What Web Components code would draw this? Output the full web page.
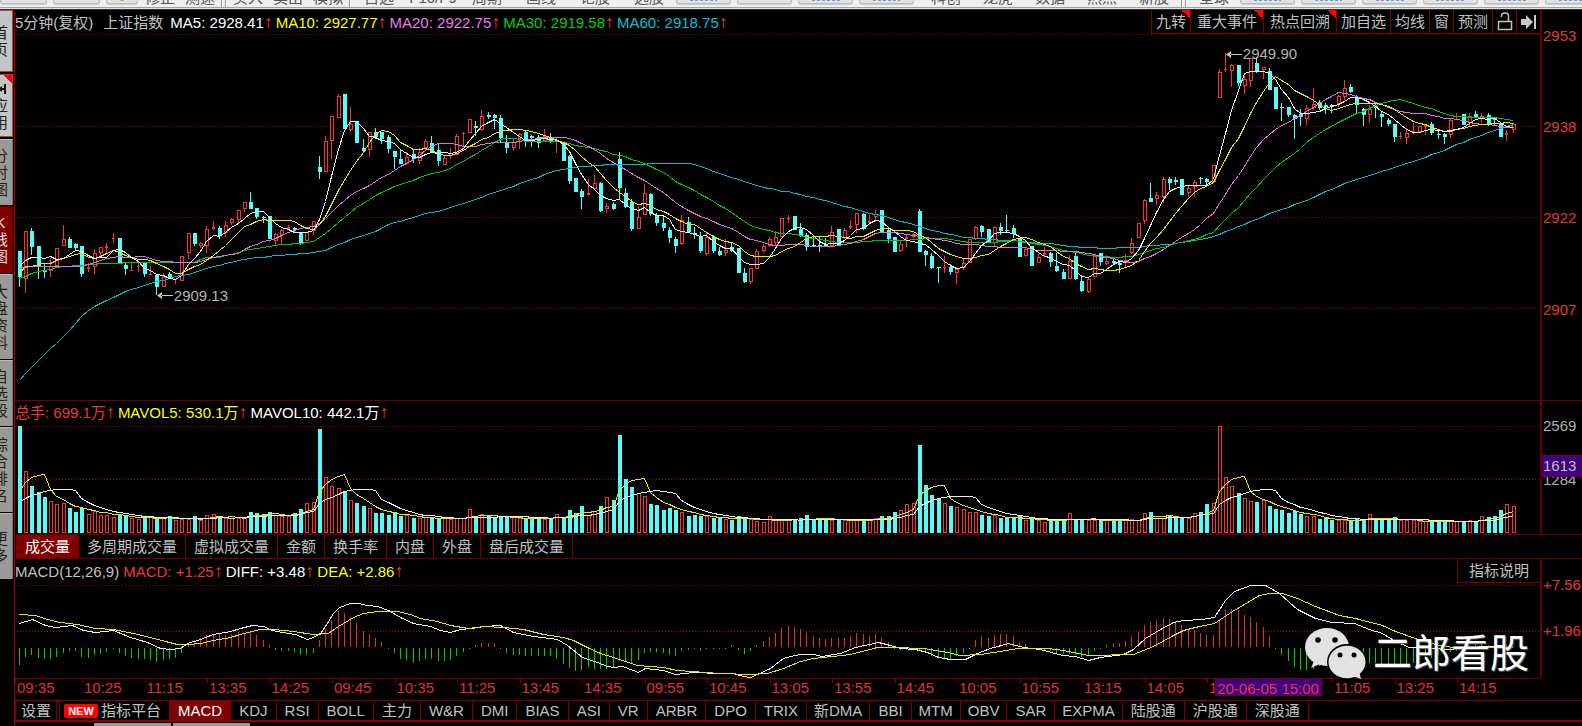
<!DOCTYPE html>
<html lang="zh-CN">
<head>
<meta charset="utf-8">
<title>上证指数 5分钟</title>
<style>
html,body{margin:0;height:100%;background:#000}
body{font:15px/18px "Liberation Sans","Noto Sans CJK SC",sans-serif;color:#c0c0c0;overflow:hidden}
</style>
</head>
<body>
<stock-workspace></stock-workspace>
<script>
const RED='#ff3232',CYAN='#54fcfc',LINE='#800000';
const BASE=`*{box-sizing:border-box}button{font:inherit;color:inherit;background:none;border:0;padding:0;margin:0;white-space:nowrap;cursor:pointer}`;
function define(name,html,setup){
  customElements.define(name,class extends HTMLElement{
    connectedCallback(){
      if(this.shadowRoot)return;
      const root=this.attachShadow({mode:'open'});
      root.innerHTML='<style>'+BASE+'</style>'+(typeof html==='function'?html(this):html);
      if(setup)setup(root,this);
    }
  });
}

/* Candles, one per five minutes: colour, high, body top, body bottom, low (thirds of a pixel). */
const candles=`c752,752,832,860 r692,692,836,878 c684,692,740,766 c737,737,797,838 c792,811,815,834 r775,797,812,830 r745,745,797,797 r674,718,737,737 c710,718,745,745 c730,733,745,750
c737,737,822,830 r790,800,806,815 r748,760,800,823 r741,741,760,770 r730,738,745,760 r700,714,718,728 c714,714,790,790 c785,795,808,826 r785,809,812,812 r785,797,800,815
c790,790,822,832 r797,821,825,825 c825,825,862,885 r820,830,862,862 c815,822,838,838 r836,836,840,852 r767,767,843,843 r700,700,760,776 c700,700,733,738 r725,730,738,745
r677,688,738,758 r662,682,686,690 c677,684,708,716 r664,675,700,712 r655,656,670,675 r630,630,660,670 r606,606,628,635 c576,606,628,628 c625,625,652,658 c648,650,653,668
c648,648,718,718 r700,702,722,735 r688,690,705,735 r674,682,686,690 c682,685,690,697 c697,697,730,736 r697,697,724,724 r663,663,693,706 c467,500,515,538 r408,422,517,517
r349,349,424,476 r283,288,355,355 c283,283,388,388 r320,373,391,395 c364,364,430,430 c418,445,453,460 r397,397,451,470 c384,395,410,418 c395,395,418,432 c405,410,448,460
c452,452,472,508 c450,478,492,492 r455,472,492,495 c450,462,478,488 r443,455,484,492 r418,422,443,450 c407,430,458,458 c433,450,482,497 r465,475,496,496 r445,460,468,476
r402,408,464,465 r397,399,402,438 r358,358,398,398 c362,377,384,408 r331,348,390,392 c335,346,350,358 c342,345,354,388 c346,354,415,430 c405,430,445,458 r415,427,443,452
r400,402,418,448 c394,395,420,440 c405,409,414,440 c405,410,430,445 r388,408,424,425 c400,412,424,430 r415,422,426,460 c428,428,482,482 c465,468,542,552 c535,535,575,575
c568,572,590,628 r538,580,585,585 r526,550,566,570 c546,550,632,635 r610,618,628,640 c605,612,628,630 c456,478,565,598 c565,578,622,625 c598,605,688,692 r618,652,686,686
r552,580,645,645 c580,582,643,648 c640,645,670,678 c648,668,684,692 c680,690,714,730 c712,716,738,760 r645,660,732,735 c650,666,696,698 c680,698,706,718 c697,708,752,758
r700,712,762,768 c706,712,752,758 c740,754,766,768 r718,750,758,768 c728,740,752,756 c744,744,820,820 c805,818,846,848 r803,803,846,853 r747,752,806,806 r733,738,754,756
r710,718,738,742 r692,711,730,735 r655,655,710,710 r645,654,658,670 c647,647,690,690 c670,688,708,710 c700,704,740,752 c710,735,742,742 c712,734,742,756 c715,733,738,740
r678,696,738,742 c688,688,735,735 r684,690,715,718 r660,678,684,686 r640,640,676,700 c640,642,686,690 r645,664,668,675 r630,642,652,665 c630,630,695,695 c682,690,718,728
c712,712,755,755 r720,732,754,755 r705,712,716,740 r698,702,712,715 c627,632,755,755 c750,752,764,798 c760,768,805,808 c800,800,803,850 r768,800,803,820 c792,800,815,826
r800,806,818,853 r775,788,804,810 r718,718,790,790 r678,682,718,720 c676,678,695,710 c688,688,730,730 r678,682,730,740 c670,680,692,705 c646,690,694,695 c676,685,702,715
c715,715,772,772 r740,748,769,770 c738,738,797,797 r762,772,788,790 r740,758,766,770 c756,760,785,800 c760,797,814,815 c808,815,838,838 r765,782,836,838 c758,768,838,840
c826,843,872,876 r835,836,875,880 r768,768,832,832 c758,760,785,798 r765,783,793,795 c775,784,790,795 c780,790,794,818 r762,780,790,800 r715,728,760,762 r668,668,713,713
r598,600,664,672 c550,594,605,606 r575,584,598,615 r532,538,590,608 c530,538,550,570 c532,540,545,556 c538,538,584,584 r558,565,578,590 r540,545,562,592 c530,535,538,552
c535,538,545,556 r494,494,545,545 r207,217,293,293 r160,208,210,215 r193,196,213,260 c196,196,248,258 r228,238,257,282 r175,175,244,260 c172,190,214,218 r200,202,210,236
c205,212,270,270 c261,261,328,328 c308,320,323,362 c321,321,345,350 c343,345,358,418 c328,343,350,377 r316,323,358,376 r264,312,325,330 c300,305,325,330 c308,314,320,342
c312,315,320,338 r285,288,312,320 r241,265,290,300 c252,260,275,278 c284,292,316,340 c325,328,346,377 r316,328,346,368 c308,318,325,355 c335,343,352,380 c355,361,372,377
c372,372,412,425 r395,407,410,418 r385,400,413,433 r368,392,396,405 r377,377,395,395 r374,376,382,406 c366,372,400,405 c390,402,406,418 c400,402,411,432 r355,361,405,415
r340,358,360,360 c343,343,375,375 r338,348,370,380 c332,343,350,350 r340,348,356,368 c340,345,374,377 c350,355,360,376 c372,372,410,410 r390,398,406,422 r370,372,390,398`
 .trim().split(/\s+/).map(s=>({up:s[0]==='r',v:s.slice(1).split(',').map(Number)}));

/* Traded volume, one trading day (48 bars) to a row. */
const volume=`320 187 142 124 108 97 86 90 75 64 76 58 66 53 55 49 55 52 46 42 48 50 42 44 52 38 42 42 52 40 55 56 48 44 46 46 48 64 60 56 64 53 52 52 60 72 90 93
312 168 142 134 124 100 90 80 75 60 60 53 62 50 53 46 46 48 48 44 44 42 44 44 72 48 56 50 48 48 48 48 46 42 48 46 42 45 56 48 68 60 80 55 65 80 108 98
294 162 138 120 112 88 84 68 76 68 64 50 54 50 50 46 46 42 38 52 44 42 35 34 52 38 38 38 38 46 53 42 42 46 38 40 38 40 40 42 40 45 52 52 64 68 86 90
264 143 113 104 90 82 78 71 64 64 53 50 54 44 46 44 50 38 43 40 34 38 38 38 60 40 40 38 40 40 42 40 38 40 42 40 60 64 45 45 52 50 48 46 60 64 88 90
322 168 142 120 105 96 94 98 80 72 68 60 66 56 50 50 42 44 40 38 40 38 46 40 56 40 40 42 48 38 38 38 36 36 36 36 36 36 36 36 38 36 50 48 52 68 86 80`.trim().split(/\s+/).map(Number);

/* MACD histogram, positive above the zero line. */
const histogram=`-50 -27 -20 -30 -33 -33 -27 -16 -10 -10
-27 -30 -22 -18 -12 -4 -15 -25 -30 -32
-33 -35 -42 -37 -32 -30 -16 12 20 28
35 38 40 35 40 44 42 44 35 22
5 -5 -8 -10 -13 -22 -22 -14 20 55
82 108 103 90 72 48 38 26 14 -3
-15 -33 -35 -44 -38 -32 -32 -40 -40 -36
-25 -12 -3 5 12 12 12 -3 -16 -20
-20 -24 -24 -24 -24 -24 -32 -47 -60 -70
-66 -58 -62 -62 -62 -58 -40 -40 -45 -35
-15 -12 -12 -15 -20 -24 -10 -5 -3 -8
-3 -4 -4 -4 5 -5 -17 -8 7 18
30 42 57 64 60 53 43 32 27 24
27 27 27 34 42 38 34 38 27 14
-3 -5 -5 -6 -8 -15 -24 -27 -30 -32
-25 -15 -3 20 32 28 35 38 38 32
15 8 -3 -5 -5 -8 -15 -18 -18 -20
-26 -24 -8 -3 6 12 12 18 32 45
65 76 80 87 83 77 65 53 50 42
35 35 85 110 115 110 95 90 75 60
33 -3 -20 -40 -58 -65 -65 -62 -55 -45
-45 -45 -45 -42 -42 -42 -44 -44 -52 -56
-56 -54 -50 -44 -38 -34 -30 -20 -15 -12
-8 -5 3 8 12 5 -3 3 5 3`.trim().split(/\s+/).map(Number);

const diff=[[58,968],[95,957],[135,975],[165,980],[215,975],[250,990],[285,997],[340,990],[390,1012],[440,1025],[480,1043],[510,1047],[540,1045],[560,1030],[600,1018],[640,1003],[690,992],[720,983],[755,974],[790,977],[815,990],[845,995],[885,1003],[921,1018],[940,1012],[959,1000],[980,970],[1000,940],[1018,920],[1050,908],[1075,908],[1100,916],[1130,918],[1165,930],[1200,950],
[1240,968],[1290,978],[1320,990],[1350,995],[1380,988],[1415,983],[1450,978],[1500,976],[1540,995],[1600,1008],[1670,1018],[1700,1035],[1746,1070],[1790,1085],[1820,1098],[1840,1102],[1865,1098],[1900,1110],[1915,1115],[1935,1105],[1990,1110],[2025,1122],[2080,1117],[2160,1120],[2200,1120],[2230,1128],[2250,1130],[2270,1123],[2310,1103],[2350,1075],[2370,1067],[2400,1062],
[2440,1062],[2465,1067],[2520,1058],[2565,1040],[2635,1027],[2670,1035],[2700,1045],[2745,1048],[2780,1057],[2815,1070],[2850,1077],[2895,1077],[2930,1060],[2970,1043],[3025,1030],[3070,1040],[3120,1048],[3185,1065],[3225,1068],[3265,1080],[3300,1070],[3370,1062],[3400,1048],[3435,1015],[3480,988],[3520,965],[3550,960],
[3606,957],[3643,952],[3676,900],[3701,873],[3736,862],[3751,855],[3796,855],[3836,880],[3891,928],[3946,953],[3996,966],[4061,970],[4106,988],[4146,998],[4186,1022],[4226,1040],[4286,1043],[4346,1048],[4406,1042],[4466,1038],[4536,1042]];
const dea=[[58,942],[105,945],[140,957],[180,966],[230,971],[285,983],[340,988],[400,998],[450,1010],[495,1022],[530,1032],[565,1032],[600,1028],[640,1020],[690,1010],[740,997],[780,988],[820,987],[880,994],[940,1003],[985,998],[1015,978],[1060,950],[1090,940],[1130,932],[1190,933],
[1230,943],[1260,955],[1310,963],[1350,975],[1405,983],[1450,978],[1510,980],[1570,988],[1630,1002],[1690,1012],[1720,1020],[1760,1042],[1800,1058],[1840,1070],[1910,1095],[1990,1100],[2030,1110],[2160,1118],[2250,1123],[2300,1120],[2350,1103],[2400,1084],
[2440,1075],[2550,1063],[2630,1042],[2680,1040],[2770,1043],[2840,1057],[2880,1065],[2940,1063],[3000,1052],[3050,1043],[3140,1043],[3190,1050],[3265,1065],[3400,1062],[3460,1038],[3520,1005],[3550,990],
[3596,977],[3643,968],[3696,932],[3776,885],[3806,878],[3846,878],[3891,895],[3946,918],[4016,945],[4066,953],[4146,975],[4186,992],[4246,1014],[4306,1033],[4356,1040],[4536,1040]];

const X=i=>Math.floor(4.33+6.25*i);
const rect=(x,y,w,h,f)=>`<rect x="${x}" y="${y}" width="${w}" height="${h}" fill="${f}"/>`;
const box=(x,y,w,h)=>`<rect x="${x+.5}" y="${y+.5}" width="${w-1}" height="${Math.max(h-1,1)}" fill="#000" stroke="${RED}"/>`;
const poly=(pts,c)=>`<polyline points="${pts.map(p=>p.join(',')).join(' ')}" fill="none" stroke="${c}"/>`;
const dots=y=>`<path d="M2 ${y}.5H1525" stroke="#a00000" stroke-dasharray="1 2" fill="none"/>`;
const svg=(h,body)=>`<svg viewBox="0 0 1525 ${h}" preserveAspectRatio="none" shape-rendering="crispEdges" aria-hidden="true">${body}</svg>`;
/* Moving average whose first values come from key points [index, value] before a full window exists. */
function average(vals,n,lead){
  return vals.map((_,i)=>{
    if(i>=n-1){let s=0;for(let k=i-n+1;k<=i;k++)s+=vals[k];return s/n}
    let a=lead[0],b=lead[lead.length-1];
    for(let k=0;k<lead.length-1;k++)if(lead[k][0]<=i&&lead[k+1][0]>=i){a=lead[k];b=lead[k+1]}
    return b[0]===a[0]?a[1]:a[1]+(b[1]-a[1])*(i-a[0])/(b[0]-a[0]);
  });
}
const track=(vals,map)=>vals.map((v,i)=>[X(i)+.5,Math.round(map(v))+.5]);

function priceSvg(){
  const y=v=>Math.round(v/3)-10;
  let s=[24,116,207,298].map(dots).join('');
  candles.forEach((c,i)=>{
    const x=X(i),[h,t,b,l]=c.v.map(y),col=c.up?RED:CYAN;
    s+=rect(x,h,1,Math.max(l-h,1),col);
    s+=c.up&&b-t>2?box(x-1,t,4,b-t):rect(x-1,t,c.up?3:4,Math.max(b-t,1),col);
  });
  const close=candles.map(c=>c.up?c.v[1]:c.v[2]),f=v=>v/3-10.5;
  s+=poly(track(average(close,60,[[0,1140],[3.5,1072],[6,1030],[11.3,925],[13,910],[16,882],[20,855],[24,835],[27,822],[31,800],[36,778],[41,767],[47,758],[49,750],[53,718],[57,695],[59,675]]),f),'#00b8d0');
  s+=poly(track(average(close,30,[[0,835],[3,815],[7,800],[10,795],[14,790],[20,787],[28,788]]),f),'#00c800');
  s+=poly(track(average(close,20,[[0,805],[2,800],[10,798],[14,775],[16,770],[18,772]]),f),'#e070e0');
  s+=poly(track(average(close,10,[[0,820],[1,800],[2,800],[3,793],[4,790],[5,790],[6,782],[7,775],[8,768]]),f),'#e8e800');
  s+=poly(track(average(close,5,[[0,800],[1,782],[2,773],[3,772]]),f),'#f0f0f0');
  return svg(390,s);
}
function volumeSvg(){
  let s=dots(26)+dots(79);
  volume.forEach((v,i)=>{
    const x=X(i),h=Math.round(v/3),c=candles[i];
    s+=c&&c.up?box(x-1,133-h,4,h):rect(x-1,133-h,4,h,CYAN);
  });
  const f=v=>133-v/3;
  s+=poly(track(average(volume,5,[[0,127],[1,153],[2,168],[3,173]]),f),'#e8e800');
  s+=poly(track(average(volume,10,[[0,92],[1,105],[2,113],[3,120],[4,127],[5,128],[6,131],[7,133],[8,131]]),f),'#f0f0f0');
  return svg(134,s);
}
function macdSvg(){
  let s=dots(26)+dots(72);
  histogram.forEach((v,i)=>{
    const h=Math.max(1,Math.round(Math.abs(v)/3));
    s+=v>0?rect(X(i),88-h,1,h,'#e03030'):rect(X(i),89,1,h,'#00d000');
  });
  const p=a=>a.map(([x,y])=>[Math.round(x/3)-15+.5,Math.round(y/3)-259+.5]);
  return svg(119,s+poly(p(diff),'#f0f0f0')+poly(p(dea),'#e8e800'));
}

define('tool-strip',()=>{
  const t=l=>l.map(x=>`<button class="t">${x}</button>`).join('');
  const p=l=>l.map(w=>`<button class="p" aria-label="工具">${w?`<i style="width:${w}px"></i>`:''}</button>`).join('');
  return `<style>
  :host{display:flex;align-items:flex-end;height:10px;overflow:hidden;background:linear-gradient(#efefef 7px,#a0a0a0 7px,#a0a0a0 8px,#f4f4f4 8px,#d0d0d0 9px,#333 9px);color:#555;white-space:nowrap}
  div{display:flex;flex:none;align-items:flex-end}
  .t{line-height:20px;height:20px;margin-bottom:2px;flex:none}
  .a .t{width:40px}.b .t{width:54px}.c .t{width:52px}
  .p{width:55px;height:20px;margin:0 6px 6px 0;border:1px solid #bbb;border-radius:3px;background:#e2e2e2;box-shadow:0 1px #cfcfcf;display:flex;align-items:flex-end;justify-content:center;flex:none}
  .p.s{width:47px}.p.m{width:32px;margin-right:2px}
  i{height:2px;margin-bottom:2px;background:repeating-linear-gradient(90deg,#6aa0e0 0 3px,#dfe3ea 3px 5px)}
  .m i{width:6px;height:3px;background:#c8962c;border-radius:0 0 3px 3px}
  hr{width:2px;height:8px;margin:0 1px 3px;border:0;border-left:1px solid #999;border-right:1px solid #fff;flex:none}
  </style>
  <div><button class="p s" aria-label="后退"></button><button class="p s" aria-label="前进"></button><button class="p m" aria-label="提示"><i></i></button></div>
  <div class="a">${t(['修正','测速'])}<hr><hr>${t(['买入','卖出','模拟'])}<hr></div>
  <div class="b">${t(['自选','F10/F9','周期','画线','论股','选股'])}</div>
  <div>${p([27,0,28,27])}</div>
  <div class="c">${t(['科创','龙虎','数据','热点','新股'])}<hr><hr>${t(['全球'])}</div>
  <div>${p([27,27,28,30,28,28])}</div>`;
});

define('side-nav',()=>`<style>
  :host{display:flex;flex-direction:column;background:#000;overflow:hidden;width:14px;padding-bottom:4px}
  button{position:relative;display:flex;align-items:center;width:13px;margin-bottom:1px;background:#999;color:#222;border-top:1px solid #bbb;border-right:1px solid #777;line-height:17px;white-space:normal;overflow:hidden;flex:1 1 0}
  span{flex:none;width:15px;margin-left:-7px;text-align:center;word-break:break-all}
  .l{background:#c4c4c4;border-color:#b04040;border-bottom:1px solid #b04040;margin-bottom:2px}
  .k{background:#800000;color:#fff;border-color:#600}
  .k span{color:#ddd}
  .n::after{content:"";position:absolute;right:0;top:0;width:9px;height:9px;background:linear-gradient(45deg,transparent 50%,#f00 50%)}
  svg{display:block;margin:2px 0 2px 5px}
  </style>`+[['首页',61,'l'],['应用',63,'l n'],['分时图',66,''],['K线图',67,'k'],['大盘资料',86,''],['自选股',67,''],['综合排名',86,''],['更多',66,'']]
  .map(([t,g,c])=>`<button class="${c}" style="flex-grow:${g}"><span>${c.includes('n')?'<svg width="9" height="12" viewBox="0 0 9 12"><path d="M0 6L4 3V9zM6 1h2v10H6zM3 5h3v2H3z" fill="#111"/></svg>':''}${t}</span></button>`).join(''));

define('legend-line',`<style>
  :host{display:flex;align-items:center;height:24px;white-space:nowrap;position:relative;padding-top:1px}
  ::slotted(span){margin-right:4px}
  </style><slot></slot>`);
define('legend-value',`<style>:host{display:block;margin-right:3px}b{font-weight:400;font-size:18px;line-height:15px;color:#ff3232}</style><slot></slot><b>↑</b>`);

define('chart-tools',()=>`<style>
  :host{display:flex;height:24px;border-bottom:1px solid ${LINE};background:#000}
  button{position:relative;border-left:1px solid ${LINE};min-width:24px;padding:0 4px;display:flex;align-items:center;justify-content:center}
  .w{padding:0 6px}
  .i{padding:0 3px}
  .f::after{content:"";position:absolute;right:0;top:0;width:9px;height:9px;background:linear-gradient(45deg,transparent 50%,#f00 50%)}
  svg{display:block}
  </style>
  <button class="f">九转</button><button class="f w">重大事件</button><button class="f w">热点回溯</button><button>加自选</button><button>均线</button><button>窗</button><button>预测</button>
  <button class="i" aria-label="锁定"><svg width="16" height="20" viewBox="0 0 16 20" fill="none" stroke="#c0c0c0"><path d="M1.500 9.500h13v8h-13z" stroke-width="1.500"/><path d="M4.500 5V4q0-3 3.500-3t3.500 3v5" stroke-width="1.500"/></svg></button>
  <button class="i" aria-label="收起"><svg width="16" height="16" viewBox="0 0 16 16" fill="#c8c8c8"><path d="M0 5h5V1l7 7-7 7v-4H0zM13 1h2v14h-2z"/></svg></button>`);

define('axis-scale',`<style>
  :host{position:relative;display:grid;border-left:2px solid #600000;padding:17px 0 0 1px;white-space:nowrap;color:#e03838}
  ::slotted(mark){position:absolute;left:0;right:0;top:55px;background:#400080;color:#c0c0c0;border:1px solid #700030;border-width:1px 0;padding:1px 0 1px 1px}
  </style><slot></slot>`);

define('tab-strip',(el)=>`<style>
  :host{display:flex;background:#000;padding-left:1px}
  button{border-left:1px solid ${LINE};padding:0 8px;display:flex;align-items:center}
  button:last-of-type{border-right:1px solid ${LINE}}
  .on{background:#800000;color:#fff}
  .tight{padding:0 7px}
  .set{padding:0 5px;border-right:1px solid ${LINE};margin-right:2px}
  .new{padding:0 8px 0 4px}
  em{font:bold 11px/14px "Liberation Sans",sans-serif;font-style:normal;color:#fff;background:#f00;border-radius:2px;width:34px;margin-right:3px;text-align:center}
  </style>`+el.getAttribute('items').split(',').map(t=>{
    const on=t===el.getAttribute('selected');
    if(t==='设置')return `<button class="set">${t}</button>`;
    if(t==='指标平台')return `<button class="new"><em>NEW</em>${t}</button>`;
    const tight=['新DMA','MTM','OBV','EXPMA'].includes(t);
    return `<button class="${on?'on':''}${tight?'tight':''}" aria-pressed="${on}">${t}</button>`}).join(''));

define('time-axis',()=>`<style>
  :host{position:relative;display:grid;grid-template-columns:134fr repeat(22,125fr) 166fr;border-top:1px solid ${LINE};color:#e03030}
  time{position:relative;padding:0 0 0 2px;white-space:nowrap}
  time::before{content:"";position:absolute;left:0;top:0;width:1px;height:4px;background:${LINE}}
  mark{position:absolute;left:78.7%;top:0;bottom:1px;background:#400080;color:#e03a50;border:1px solid #700030;border-top:0;padding:1px 0 0 1px;width:107px;white-space:nowrap;overflow:hidden}
  </style>`+'09:35 10:25 11:15 13:35 14:25 09:45 10:35 11:25 13:45 14:35 09:55 10:45 13:05 13:55 14:45 10:05 10:55 13:15 14:05 14:55 - 11:05 13:25 14:15'.split(' ').map(t=>`<time>${t==='-'?'':t}</time>`).join('')+'<mark>20-06-05 15:00</mark>');

define('water-mark',`<style>
  :host{display:flex;align-items:flex-start;color:#fff;font-size:39px;line-height:44px;white-space:nowrap;text-shadow:1px 1px 1px #666}
  svg{display:block;flex:none;margin-right:6px}
  span{margin-top:7px}
  </style>
  <svg width="64" height="56" viewBox="0 0 64 56" fill="#e2e2e2"><path d="M12 34L8 43l11-5z"/><ellipse cx="24" cy="22" rx="22" ry="19"/><ellipse cx="44" cy="37" rx="20" ry="18" fill="#000"/><ellipse cx="44" cy="37" rx="18.500" ry="16.300"/><path d="M50 51l8 3-2-8z"/><g fill="#000"><circle cx="15" cy="15" r="2.800"/><circle cx="32" cy="15" r="2.800"/><circle cx="37" cy="30" r="2.500"/><circle cx="51" cy="30" r="2.500"/></g></svg><span>二郎看股</span>`);

define('chart-plot',(el)=>`<style>
  :host{display:block;position:relative;min-width:0;min-height:0}
  svg{position:absolute;inset:0;width:100%;height:100%;display:block}
  ::slotted(*){z-index:1}
  </style>`+({price:priceSvg,volume:volumeSvg,macd:macdSvg})[el.getAttribute('kind')]()+'<slot></slot>');

define('stock-workspace',()=>`<style>
  :host{display:grid;grid-template-rows:10px minmax(0,1fr);height:100vh}
  .main{display:grid;grid-template-columns:14px minmax(0,1fr);min-height:0}
  side-nav{height:calc(100% - 142px)}
  .desk{display:grid;grid-template-rows:minmax(0,390fr) minmax(0,134fr) 25px minmax(0,119fr) 22px 22px 4px;min-height:0;border-left:1px solid #a00000}
  .row{display:grid;grid-template-columns:minmax(0,1fr) 42px;min-height:0}
  .v{box-shadow:inset 0 1px #700000}
  .price axis-scale{grid-template-rows:91fr 91fr 92fr 99fr}
  .v axis-scale{grid-template-rows:54fr 63fr}
  .v axis-scale span{color:#b0b0b0}
  .m axis-scale{grid-template-rows:46fr 56fr}
  .tabs{border-top:1px solid #700000;border-bottom:1px solid #700000}
  .time{padding-right:42px}
  .ind{border-top:1px solid ${LINE};border-bottom:2px solid #900000;padding-left:0}
  .foot{display:flex;background:#000;padding-left:79px;gap:2px;align-items:flex-end}
  .foot i{width:77px;height:3px;background:#999}
  .head{display:flex;justify-content:space-between;position:relative}
  .period{margin-right:10px}
  .name{margin-right:7px}
  .y{color:#ffff00}.p{color:#f078f0}.g{color:#00d000}.b{color:#00c0d8}.w{color:#fff}.r{color:#f03838}
  .note{position:absolute;display:flex;align-items:center;gap:1px;color:#b4b4b4}
  .lo{left:9.3%;top:71%}.hi{left:79.400%;top:9%}
  .help{position:absolute;right:0;top:0;height:24px;border:solid ${LINE};border-width:0 0 1px 1px;background:#000;padding:0 11px}
  water-mark{position:absolute;right:11px;top:66px}
  </style>
  <tool-strip></tool-strip>
  <div class="main"><side-nav></side-nav>
  <div class="desk">
    <div class="row price"><chart-plot kind="price">
      <div class="head"><legend-line><span class="period">5分钟(复权)</span><span class="name">上证指数</span><legend-value class="w">MA5: 2928.41</legend-value><legend-value class="y">MA10: 2927.77</legend-value><legend-value class="p">MA20: 2922.75</legend-value><legend-value class="g">MA30: 2919.58</legend-value><legend-value class="b">MA60: 2918.75</legend-value></legend-line><chart-tools></chart-tools></div>
      <div class="note lo"><svg width="16" height="7" viewBox="0 0 16 7"><path d="M5 0L0 3.500 5 7zM4 3h12v1H4z" fill="#c8c8c8"/></svg>2909.13</div>
      <div class="note hi"><svg width="16" height="7" viewBox="0 0 16 7"><path d="M5 0L0 3.500 5 7zM4 3h12v1H4z" fill="#c8c8c8"/></svg>2949.90</div>
    </chart-plot><axis-scale><span>2953</span><span>2938</span><span>2922</span><span>2907</span></axis-scale></div>
    <div class="row v"><chart-plot kind="volume"><legend-line><legend-value class="r">总手: 699.1万</legend-value><legend-value class="y">MAVOL5: 530.1万</legend-value><legend-value class="w">MAVOL10: 442.1万</legend-value></legend-line></chart-plot><axis-scale><span>2569</span><span>1284</span><mark>1613</mark></axis-scale></div>
    <tab-strip class="tabs" items="成交量,多周期成交量,虚拟成交量,金额,换手率,内盘,外盘,盘后成交量" selected="成交量"></tab-strip>
    <div class="row m"><chart-plot kind="macd"><legend-line><span>MACD(12,26,9)</span><legend-value class="r">MACD: +1.25</legend-value><legend-value class="w">DIFF: +3.48</legend-value><legend-value class="y">DEA: +2.86</legend-value></legend-line><button class="help">指标说明</button><water-mark></water-mark></chart-plot><axis-scale><span>+7.56</span><span>+1.96</span></axis-scale></div>
    <div class="time"><time-axis></time-axis></div>
    <tab-strip class="ind" items="设置,指标平台,MACD,KDJ,RSI,BOLL,主力,W&amp;R,DMI,BIAS,ASI,VR,ARBR,DPO,TRIX,新DMA,BBI,MTM,OBV,SAR,EXPMA,陆股通,沪股通,深股通" selected="MACD"></tab-strip>
    <div class="foot"><i></i><i></i></div>
  </div></div>`);
</script>
</body>
</html>
